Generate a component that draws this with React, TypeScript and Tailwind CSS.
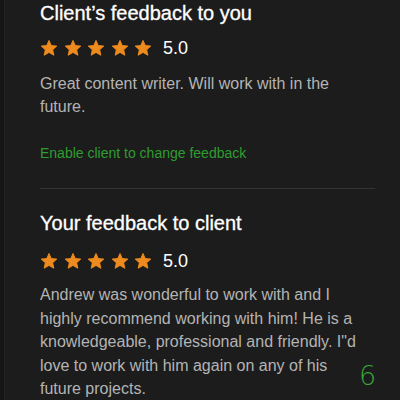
import React from 'react';

const Star = () => (
  <svg viewBox="0 0 24 24" className="h-[18px] w-[18px]" fill="#ee8a1e">
    <path
      d="M12 1.9l3.05 6.8 7.35.75-5.5 4.95 1.6 7.3L12 17.9l-6.5 3.8 1.6-7.3-5.5-4.95 7.35-.75z"
      stroke="#ee8a1e"
      strokeWidth="1.2"
      strokeLinejoin="round"
    />
  </svg>
);

function Rating({ value }: { value: string }) {
  return (
    <div className="flex h-[22px] items-center">
      <div className="flex gap-[5.5px]">
        {[0, 1, 2, 3, 4].map((i) => (
          <Star key={i} />
        ))}
      </div>
      <span className="ml-[11px] text-[18px] leading-[22px] text-white">{value}</span>
    </div>
  );
}

export default function App() {
  return (
    <div
      className="relative h-[400px] w-[400px] overflow-hidden bg-[#1c1c1c] pl-[40px] pr-[25px]"
      style={{ fontFamily: '"Liberation Sans", Arial, sans-serif' }}
    >
      {/* darker rail along the left edge */}
      <div className="absolute inset-y-0 left-0 w-[5px] border-r border-[#232323] bg-[#161616]" />

      <section className="pt-[1px]">
        <h2 className="text-[20px] leading-[24px] text-white [-webkit-text-stroke:0.3px_#ffffff]">
          Client’s feedback to you
        </h2>
        <div className="mt-[12px]">
          <Rating value="5.0" />
        </div>
        <p className="mt-[13px] pr-[5px] text-[16px] leading-[23px] text-[#b4b4b4]">
          Great content writer. Will work with in the future.
        </p>
        <button className="mt-[25px] block text-[14px] leading-[20px] text-[#2f9c2f]">
          Enable client to change feedback
        </button>
      </section>

      <div className="mt-[25px] h-px bg-[#333333]" />

      <section className="pt-[22px]">
        <h2 className="text-[20px] leading-[24px] text-white [-webkit-text-stroke:0.3px_#ffffff]">
          Your feedback to client
        </h2>
        <div className="mt-[15px]">
          <Rating value="5.0" />
        </div>
        <p className="mt-[11px] pr-[5px] text-[16px] leading-[23.5px] text-[#b4b4b4]">
          Andrew was wonderful to work with and I highly recommend working with him! He is a knowledgeable,
          professional and friendly. I"d love to work with him again on any of his future projects.
        </p>
      </section>

      {/* page number */}
      <span
        className="absolute left-[359px] top-[362px] text-[27px] leading-none font-extralight text-[#3aa73a]"
        style={{ fontFamily: '"DejaVu Sans", sans-serif' }}
      >
        6
      </span>
    </div>
  );
}
